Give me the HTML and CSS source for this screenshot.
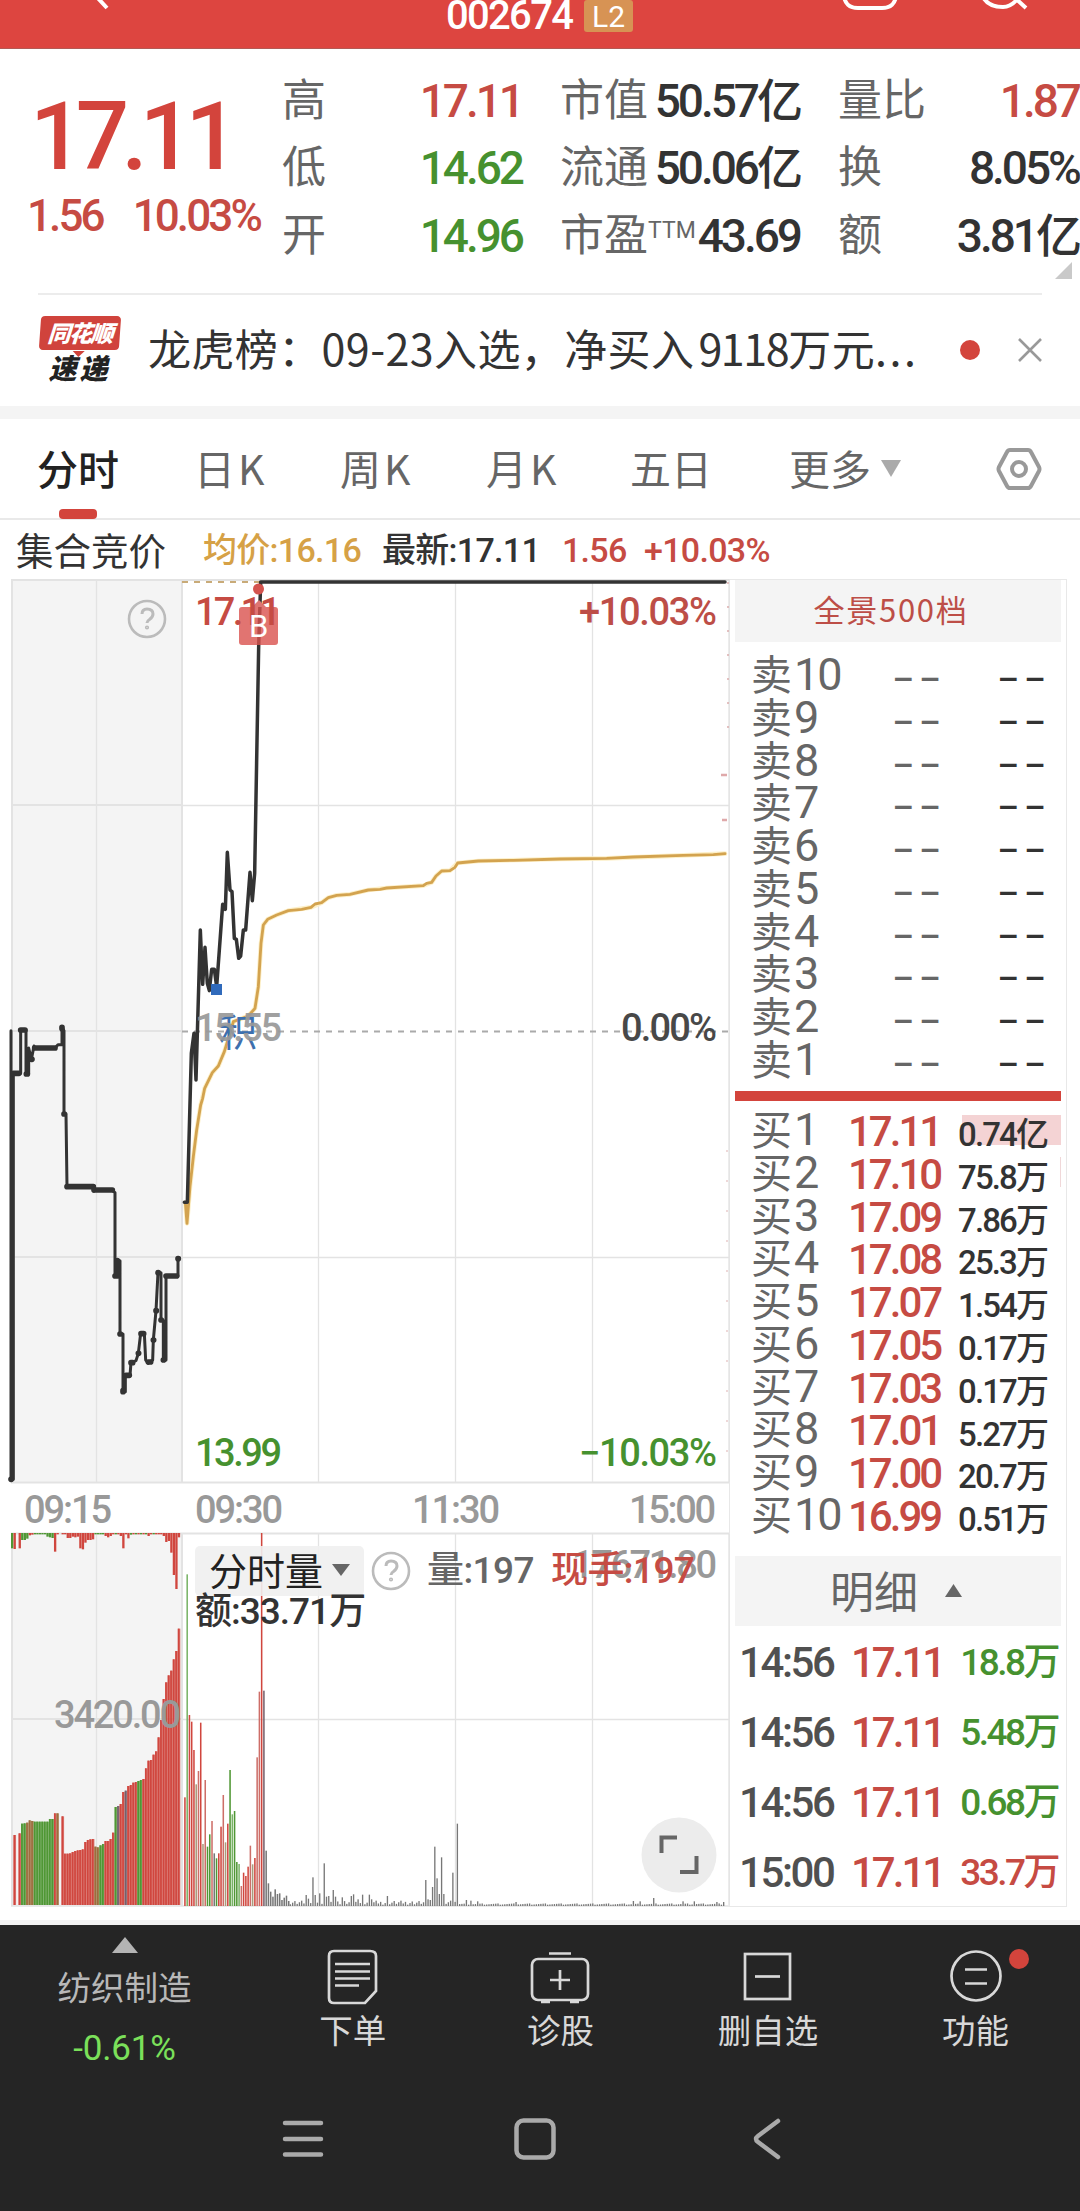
FILE: index.html
```html
<!DOCTYPE html>
<html lang="zh-CN">
<head>
<meta charset="utf-8">
<title>002674</title>
<link rel="stylesheet" href="styles.css">
</head>
<body>
<header class="topbar">
  <svg class="topbar-art" viewBox="0 0 1080 49" fill="none" stroke="#fff" stroke-width="4">
    <path d="M95 -5L107 8"/>
    <path d="M844 -6C844 4 850 8 858 8H882C890 8 896 4 896 -6"/>
    <path d="M981 -8C984 3 993 7 1003 7C1010 7 1015 3 1020 -4M1014 -3L1026 8"/>
  </svg>
  <span class="code">002674</span><span class="badge">L2</span>
</header>

<section class="quote">
  <div class="last">
    <div class="price">17.11</div>
    <div class="change"><span>1.56</span><span>10.03%</span></div>
  </div>
  <div class="metrics m1">
    <div><label>高</label><b class="up">17.11</b></div>
    <div><label>低</label><b class="down">14.62</b></div>
    <div><label>开</label><b class="down">14.96</b></div>
  </div>
  <div class="metrics m2">
    <div><label>市值</label><b>50.57亿</b></div>
    <div><label>流通</label><b>50.06亿</b></div>
    <div><label>市盈<sup>TTM</sup></label><b>43.69</b></div>
  </div>
  <div class="metrics m3">
    <div><label>量比</label><b class="up">1.87</b></div>
    <div><label>换</label><b>8.05%</b></div>
    <div><label>额</label><b>3.81亿</b></div>
  </div>
  <svg class="corner" viewBox="0 0 17 17"><path d="M17 0V17H0Z" fill="#c9c9c9"/></svg>
</section>

<section class="news">
  <div class="logo"><span class="logo-top">同花顺</span><span class="logo-bottom">速递</span></div>
  <p>龙虎榜：09-23入选，净买入<span class="amount">9118</span>万元<span class="dots">...</span></p>
  <i class="dot"></i>
  <svg class="close" viewBox="0 0 24 24" fill="none" stroke="#999" stroke-width="2.6"><path d="M1 1L23 23M23 1L1 23"/></svg>
</section>

<nav class="tabs">
  <a class="active">分时</a><a>日K</a><a>周K</a><a>月K</a><a>五日</a><a>更多</a>
  <svg class="caret" viewBox="0 0 20 17"><path d="M0 0H20L10 17Z" fill="#aaa"/></svg>
  <svg class="settings" viewBox="0 0 46 44" fill="none" stroke="#999" stroke-width="4"><path d="M14 3H32Q34 3 35 5L43 20Q44 22 43 24L35 39Q34 41 32 41H14Q12 41 11 39L3 24Q2 22 3 20L11 5Q12 3 14 3Z"/><circle cx="23" cy="22" r="7"/></svg>
</nav>

<div class="summary">
  <span class="auction">集合竞价</span><span class="avg">均价:16.16</span><span class="now">最新:17.11</span><span class="up chg">1.56</span><span class="up pct">+10.03%</span>
</div>

<main class="board">
  <div class="charts">
    <svg class="plot" viewBox="0 579 729 1341">
      <rect x="11" y="579" width="170" height="904" fill="#f4f4f4"/>
      <rect x="11" y="1533" width="170" height="373" fill="#f4f4f4"/>
      <g fill="none" stroke="#e3e3e3" stroke-width="1.3">
        <path stroke-width="2" d="M12 579V1483M182 579V1483M12 1533V1906M182 1533V1906M11 580H729M11 805H182M11 1031H182M11 1257H182M11 1482.5H729M11 1533.5H729M11 1719H182"/>
        <path d="M96.5 579V1482M318.5 579V1482M455.5 579V1482M592.5 579V1482M729 579V1482M96.5 1534V1905M318.5 1534V1905M455.5 1534V1905M592.5 1534V1905M729 1534V1905M182 805.5H729M182 1257.5H729M182 1719.5H729M11 1906H729"/>
      </g>
      <path d="M182 1031.5H729" stroke="#aaa" stroke-width="1.8" stroke-dasharray="6 6"/>
      <path d="M182 582H262" stroke="#c9ab78" stroke-width="1.8" stroke-dasharray="6 6"/>
      <path d="M728 582V730" stroke="#dcaeae" stroke-width="1.5" stroke-dasharray="2 22"/>
      <path d="M721 775H727M722 820H727" stroke="#dfa9aa" stroke-width="2.5"/>
      <path d="M727 1150V1480" stroke="#e5c4c4" stroke-width="1.3" stroke-dasharray="2 28"/>
      <g transform="translate(0 1520) scale(.33333)" id="bars"></g>
      <g transform="translate(0 1020) scale(.33333)" fill="none" stroke="#333" stroke-width="9" stroke-linejoin="round" stroke-linecap="round">
        <path d="M33 32V1378H40V160H62V30H78V162H86V84L94 118L102 78V84H165L174 74H186V22L192 32V282H198L201 500H280L282 514V510H335L345 518V768L352 722H360V942H369V1115H376V1066H390L393 1028L408 1022L415 1000L422 940H433L437 1020L445 1030L458 1020L460 960L468 872L474 758H483V900L490 902V1020H498V768H534V716"/>
        <path stroke-width="17" d="M33 1378H34M40 160H57M62 30H75M79 162H82M94 118H96M104 84H165M186 22V26M192 282H193M201 500H280M282 510H337M345 768H350M352 722V768M360 942H361M369 1115V1112M378 1066H388M393 1028H398M415 1000H416M423 941H431M445 1026H452M460 960H461M468 872H469M474 758H475M483 900H484M490 1020H491M498 768H530M534 716H535"/>
      </g>
      <g transform="translate(0 570) scale(.33333)" fill="none" stroke-linejoin="round" stroke-linecap="round">
        <path stroke="#fdf0c9" stroke-width="14" d="M556 1897L561 1960L570 1850L580 1760L590 1680L602 1605L614 1555L637 1508L655 1488L673 1445L690 1390L700 1355L745 1338L765 1315L775 1250L783 1120L790 1065L803 1048L830 1035L865 1022L933 1012L965 998L985 983L1010 976L1050 973L1105 960L1160 954L1270 947L1295 937L1308 918L1325 903L1350 902L1373 879L1435 873L1680 867L1820 865L2050 856L2175 851"/>
        <path stroke="#d3a34f" stroke-width="8.5" d="M556 1897L561 1960L570 1850L580 1760L590 1680L602 1605L608 1585L614 1555L637 1508L655 1488L673 1445L690 1390L700 1355L745 1338L765 1315L775 1250L783 1120L790 1065L803 1048L830 1035L865 1022L905 1018L933 1012L945 1002L965 998L985 983L1010 976L1050 973L1105 960L1140 958L1160 954L1270 947L1280 940L1295 937L1308 918L1325 903L1350 902L1365 892L1373 879L1435 873L1540 871L1680 867L1820 865L1900 861L2050 856L2140 854L2175 851"/>
        <path stroke="#333" stroke-width="10.5" d="M553 1897H562L574 1450L582 1390L588 1530L601 1080L608 1243L615 1132L622 1240L628 1262L635 1198H643L650 1250L668 1003L676 1018L682 847L690 960L696 965L703 1105L709 1108L716 1165L722 1158L730 1080H737L750 907L757 992L764 910L776 230L782 36H2175"/>
      </g>
      <path d="M252 607L259 600L266 607Z" fill="#de7572"/>
      <rect x="239" y="607" width="39" height="38" rx="3" fill="#d9514d" opacity=".8"/>
      <circle cx="258.5" cy="589" r="5.5" fill="#d4534e"/>
      <rect x="211" y="984" width="11" height="11" fill="#306abb"/>
      <text x="219" y="1046" font-size="38" class="cjk" fill="#3d6fae">积</text>
      <g class="num">
        <text x="195" y="625" textLength="86" fill="#c64b43">17.11</text>
        <text x="249" y="637" class="mark" fill="#fff">B</text>
        <text x="579" y="625" textLength="138" fill="#bd4e47">+10.03%</text>
        <text x="195" y="1041" textLength="87" fill="#999" opacity=".92">15.55</text>
        <text x="621" y="1041" textLength="96" fill="#484848">0.00%</text>
        <text x="195" y="1466" textLength="87" fill="#46912f">13.99</text>
        <text x="579" y="1466" textLength="138" fill="#46912f">−10.03%</text>
        <g fill="#999">
          <text x="24" y="1523" textLength="88">09:15</text>
          <text x="195" y="1523" textLength="88">09:30</text>
          <text x="412" y="1523" textLength="88">11:30</text>
          <text x="629" y="1523" textLength="87">15:00</text>
          <text x="54" y="1728" textLength="127">3420.00</text>
          <text x="572" y="1578" textLength="145">17671.80</text>
        </g>
      </g>
      <g fill="none" stroke="#bbb" stroke-width="2.6"><circle cx="147" cy="619" r="18"/><path stroke-width="3" d="M142 614Q142 609 147 609Q153 609 153 614Q153 617 149.500 619.500Q147 621 147 623"/><circle cx="147" cy="627.500" r=".8"/></g>
    </svg>
    <div class="indicator">
      <button>分时量 <svg viewBox="0 0 18 12"><path d="M0 0H18L9 12Z" fill="#666"/></svg></button>
      <svg class="help" viewBox="0 0 40 40" fill="none" stroke="#bbb" stroke-width="2.6"><circle cx="20" cy="20" r="18"/><path stroke-width="3" d="M15 15Q15 10 20 10Q26 10 26 15Q26 18 22.500 20.500Q20 22 20 24"/><circle cx="20" cy="28.500" r=".8"/></svg>
      <span class="vol">量:197</span><span class="hand">现手:197</span>
    </div>
    <div class="turnover">额:33.71万</div>
    <svg class="expand" viewBox="0 0 76 76" fill="none" stroke="#666" stroke-width="4"><circle cx="38" cy="38" r="37.500" fill="#ececec" stroke="none"/><path d="M36 20.500H20.500V36M39 55H55.500V39"/></svg>
  </div>

  <aside class="book">
    <div class="book-head">全景500档</div>
    <div class="levels sell">
      <div><label>卖<u>10</u></label><span>––</span><em>––</em></div>
      <div><label>卖<u>9</u></label><span>––</span><em>––</em></div>
      <div><label>卖<u>8</u></label><span>––</span><em>––</em></div>
      <div><label>卖<u>7</u></label><span>––</span><em>––</em></div>
      <div><label>卖<u>6</u></label><span>––</span><em>––</em></div>
      <div><label>卖<u>5</u></label><span>––</span><em>––</em></div>
      <div><label>卖<u>4</u></label><span>––</span><em>––</em></div>
      <div><label>卖<u>3</u></label><span>––</span><em>––</em></div>
      <div><label>卖<u>2</u></label><span>––</span><em>––</em></div>
      <div><label>卖<u>1</u></label><span>––</span><em>––</em></div>
    </div>
    <div class="split"></div>
    <div class="levels buy">
      <div class="depth1"><label>买<u>1</u></label><span>17.11</span><em>0.74亿</em></div>
      <div class="depth2"><label>买<u>2</u></label><span>17.10</span><em>75.8万</em></div>
      <div><label>买<u>3</u></label><span>17.09</span><em>7.86万</em></div>
      <div><label>买<u>4</u></label><span>17.08</span><em>25.3万</em></div>
      <div><label>买<u>5</u></label><span>17.07</span><em>1.54万</em></div>
      <div><label>买<u>6</u></label><span>17.05</span><em>0.17万</em></div>
      <div><label>买<u>7</u></label><span>17.03</span><em>0.17万</em></div>
      <div><label>买<u>8</u></label><span>17.01</span><em>5.27万</em></div>
      <div><label>买<u>9</u></label><span>17.00</span><em>20.7万</em></div>
      <div><label>买<u>10</u></label><span>16.99</span><em>0.51万</em></div>
    </div>
    <div class="detail-head">明细<svg viewBox="0 0 17 13"><path d="M8.500 0L17 13H0Z" fill="#666"/></svg></div>
    <div class="trades">
      <div><time>14:56</time><span>17.11</span><em class="down">18.8万</em></div>
      <div><time>14:56</time><span>17.11</span><em class="down">5.48万</em></div>
      <div><time>14:56</time><span>17.11</span><em class="down">0.68万</em></div>
      <div><time>15:00</time><span>17.11</span><em class="up">33.7万</em></div>
    </div>
  </aside>
</main>

<footer class="bottom">
  <div class="actions">
    <div class="sector"><svg viewBox="0 0 26 16"><path d="M13 0L26 16H0Z" fill="#b4b4b4"/></svg><span>纺织制造</span><b>-0.61%</b></div>
    <div class="action"><svg viewBox="0 0 60 60"><path d="M11 5H47Q53 5 53 10V45L42 57H11Q6 57 6 52V10Q6 5 11 5Z"/><path d="M12 18H47M12 25.500H47M12 32.500H47M12 39.500H36"/></svg><span>下单</span></div>
    <div class="action"><svg viewBox="0 0 60 60"><rect x="2" y="13" width="56" height="41" rx="6"/><path d="M19 7.500H41M30 24V44M20 34H40M11 56H20M40 56H49"/></svg><span>诊股</span></div>
    <div class="action"><svg viewBox="0 0 60 60"><rect x="7" y="8" width="45" height="45"/><path d="M17 30.500H42"/></svg><span>删自选</span></div>
    <div class="action"><svg viewBox="0 0 60 60"><circle cx="30" cy="30" r="24.500"/><path d="M19 23.500H41M19 37.500H41"/></svg><span>功能</span><i class="notice"></i></div>
  </div>
  <div class="system">
    <svg viewBox="0 0 42 42"><path d="M3 5H39M3 21H39M3 36.500H39"/></svg>
    <svg viewBox="0 0 42 42"><rect x="2.500" y="2.500" width="37" height="37" rx="7"/></svg>
    <svg viewBox="0 0 42 42"><path d="M32 3L12 18Q8 21 12 24L32 39"/></svg>
  </div>
</footer>
<script src="bars.js"></script>
</body>
</html>
```
FILE: bars.js
```js
(function () {
  var layer = document.getElementById('bars');
  var palette = { r: '#d0463e', g: '#4f9734', b: '#9c6d3c', d: '#75606b', k: '#777', s: '#cd6e68', t: '#79b366', y: '#a99b7b' };
  function bar(x, top, width, height, fill, opacity) {
    var el = document.createElementNS('http://www.w3.org/2000/svg', 'rect');
    el.setAttribute('x', x); el.setAttribute('y', top);
    el.setAttribute('width', width); el.setAttribute('height', Math.max(0, height));
    el.setAttribute('fill', fill);
    if (opacity) el.setAttribute('opacity', opacity);
    layer.appendChild(el);
  }
  // Call auction: matched volume rises from the base, unmatched volume hangs from the top.
  var auction = '-,945r,-,940r,911g,910g,908b,901b,903b,905g,905g,905g,905g,905g,905g,897g,897g,880r,880b,-,889r,1001r,1001r,1000r,996r,993r,991r,990r,988r,966r,960r,958r,957r,980b,982b,976g,972g,963r,963r,957r,938r,861g,858d,852r,816r,812d,798r,795r,788r,786r,783g,780g,777r,745r,722r,720r,704r,694r,652r,600r,537r,487r,466r,452r,418r,393r,326r'.split(',');
  var step = 508 / auction.length;
  auction.forEach(function (item, i) {
    if (item === '-') return;
    var top = parseInt(item, 10), color = palette[item.slice(-1)], x = 33 + i * step;
    bar(x, top, step, 1155 - top, color, 0.72);
    bar(x, top, 5, 1155 - top, color);
  });
  var hanging = '85g,87r,-,85r,60g,60g,56g,46r,44r,43g,43g,43g,43g,43g,50g,52g,54g,95r,43r,-,43r,43r,54r,54r,50r,52r,50r,85r,88r,68r,60r,60r,58r,43g,43g,43g,43g,48r,52r,48r,43r,43g,43r,48r,85r,43r,55r,44g,43r,43g,43r,43g,43r,43g,48r,43r,43g,43r,43r,43r,48r,66r,63r,98r,165r,207r,52r'.split(',');
  hanging.forEach(function (item, i) {
    if (item !== '-') bar(33 + i * step, 39, 7, parseInt(item, 10) - 39, palette[item.slice(-1)]);
  });
  // Continuous session, one bar a minute.
  var open = '832r,163t,585r,605r,690r,793y,753s,608r,972y,780s,980g,943g,903s,1000k,1015g,1000r,920r,825s,967y,911r,750g,883t,873g,1026g,1032t,1098s,1058r,1068r,1040r,977s,1033y,1014r,712s,515s,39r,512d,992k,1090k,1115k,1130k,1108k,1122k,1120k,1140k,1133k,1127k,1143k'.split(',');
  var pitch = 6.77;
  open.forEach(function (item, i) {
    var top = parseInt(item, 10);
    bar(552.5 + i * pitch, top, 4.6, 1158 - top, palette[item.slice(-1)]);
  });
  var peaks = { 54: 1125, 55: 1136, 57: 1072, 58: 1125, 60: 1120, 62: 1030, 63: 1130, 64: 1128, 66: 1110, 67: 1130, 70: 1132, 74: 1128, 75: 1123, 77: 1138, 79: 1124, 82: 1124, 83: 1138, 90: 1128, 93: 1143, 107: 1080, 108: 1138, 109: 1140, 110: 1101, 111: 980, 112: 1075, 113: 1122, 114: 1012, 115: 1122, 119: 1058, 121: 911, 125: 1140, 127: 1142, 130: 1144, 147: 1146, 199: 1143, 202: 1144, 208: 1134, 221: 1144, 226: 1144, 236: 1146, 239: 1146 };
  for (var i = 47; i < 240; i++) {
    var noise = i < 122 ? (i * 37 % 11) * 1.2 : (i * 29 % 7) * 0.6;
    var top = peaks[i] || 1154 - noise;
    bar(551 + i * pitch, top, 4, 1158 - top, palette.k);
  }
})();
```
FILE: styles.css
```css
* { box-sizing: border-box; }
body { margin: 0; width: 1080px; height: 2211px; overflow: hidden; background: #fff; color: #333; font-family: Roboto, "Noto Sans CJK SC", sans-serif; }
svg { display: block; flex: none; overflow: visible; }
b, em, i, label { font-style: normal; }
.up { color: #c64b43; }
.down { color: #46912f; }

.topbar { position: relative; height: 49px; padding-left: 446px; display: flex; align-items: flex-start; background: #dd4540; border-bottom: 1px solid #b35a55; overflow: hidden; color: #fff; }
.topbar-art { position: absolute; left: 0; top: 0; width: 1080px; height: 49px; }
.code { margin-top: -7px; width: 138px; font-size: 40px; line-height: 46px; font-weight: 500; letter-spacing: -1.7px; }
.badge { width: 49px; height: 32px; border-radius: 3px; background: #d79354; text-align: center; font-size: 30px; line-height: 33px; }

.quote { position: relative; height: 244px; padding-top: 18px; display: flex; }
.last { width: 282px; color: #d3443c; }
.price { margin: 15px 0 0 30px; font-size: 94px; line-height: 110px; font-weight: 500; letter-spacing: -7.7px; }
.change { display: flex; gap: 30px; margin: 0 0 0 27px; font-size: 44px; line-height: 48px; color: #c64b43; letter-spacing: -2.9px; font-weight: 500; }
.metrics > div { display: flex; justify-content: space-between; align-items: center; height: 67.5px; white-space: nowrap; }
.metrics label { font-size: 44px; line-height: 60px; color: #666; }
.metrics b { font-size: 46px; line-height: 60px; font-weight: 500; letter-spacing: -3px; }
.metrics sup { font-size: 23px; line-height: 0; vertical-align: 13px; }
.m1 { width: 240px; }
.m2 { width: 240px; margin-left: 38px; }
.m3 { width: 241px; margin-left: 38px; }
.corner { position: absolute; left: 1055px; top: 213px; width: 17px; height: 17px; }

.news { position: relative; height: 126px; padding: 0 38px; display: flex; align-items: center; border-bottom: 13px solid #f4f4f4; }
.news::before { content: ""; position: absolute; left: 38px; right: 38px; top: 0; height: 2px; background: #ececec; }
.logo { position: relative; width: 83px; height: 68px; display: flex; flex-direction: column; align-items: center; font-family: "Noto Sans CJK SC", sans-serif; font-weight: 900; font-style: italic; }
.logo-top { width: 80px; height: 36px; background: #d0433c; color: #fff; font-size: 23px; line-height: 33px; text-align: center; border-radius: 4px; transform: skewX(-4deg); letter-spacing: -1.5px; }
.logo-top::after { content: ""; position: absolute; left: 34px; top: 35px; border: 6px solid transparent; border-top-color: #d0433c; border-bottom: 0; }
.logo-bottom { font-size: 28px; line-height: 34px; letter-spacing: 3px; color: #222; }
.news p { margin: -5px 0 0 27px; width: 800px; font-family: "Noto Sans CJK SC", sans-serif; font-size: 43px; line-height: 60px; letter-spacing: .4px; white-space: nowrap; }
.amount { margin-left: 4px; letter-spacing: -1.4px; }
.dots { letter-spacing: 2.5px; }
.dot { width: 20px; height: 20px; margin-left: 12px; border-radius: 50%; background: #d3443c; }
.close { width: 24px; height: 24px; margin-left: 38px; }

.tabs { position: relative; height: 101px; display: flex; align-items: center; padding-left: 37px; border-bottom: 2px solid #e9e9e9; color: #666; font-family: "Noto Sans CJK SC", sans-serif; font-size: 41px; line-height: 60px; }
.tabs a { width: 150px; margin-top: -4px; white-space: nowrap; }
.tabs a:nth-child(1) { width: 157px; color: #222; font-weight: 500; }
.tabs a:nth-child(2) { width: 146px; letter-spacing: 3px; }
.tabs a:nth-child(3) { width: 146px; letter-spacing: 3px; }
.tabs a:nth-child(4) { width: 144px; letter-spacing: 3px; }
.tabs a:nth-child(5) { width: 159px; }
.tabs a:nth-child(6) { width: 92px; }
.tabs .active::after { content: ""; position: absolute; left: 59px; bottom: -1px; width: 38px; height: 10px; border-radius: 4px; background: #d3443c; }
.caret { width: 20px; height: 17px; }
.settings { width: 46px; height: 44px; margin-left: 95px; }

.summary { height: 59px; display: flex; align-items: center; padding: 1px 0 0 16px; font-size: 34px; line-height: 50px; font-weight: 500; letter-spacing: -.7px; white-space: nowrap; }
.summary .auction { width: 187px; margin-top: -3px; font-family: "Noto Sans CJK SC", sans-serif; font-size: 37.5px; font-weight: 400; letter-spacing: 0; }
.summary .avg { width: 179px; color: #d6a146; }
.summary .now { width: 180px; }
.summary .chg { width: 82px; }

.board { display: flex; height: 1341px; }
.charts { position: relative; width: 729px; }
.plot { width: 729px; height: 1341px; }
.plot text { font-family: Roboto, sans-serif; font-size: 38px; font-weight: 500; }
.plot .cjk { font-family: "Noto Sans CJK SC", sans-serif; font-weight: 400; }
.plot .mark { font-size: 31px; font-weight: 400; }
.indicator { position: absolute; left: 195px; top: 967px; height: 50px; display: flex; align-items: center; font-size: 37px; font-weight: 500; line-height: 50px; letter-spacing: -.6px; white-space: nowrap; }
.indicator button { display: flex; align-items: center; width: 169px; height: 50px; padding: 0 0 5px 14px; gap: 9px; border: 0; border-radius: 5px; background: #f0f0f0e6; color: #222; font: 400 38px/50px "Noto Sans CJK SC", sans-serif; }
.indicator button svg { width: 18px; height: 12px; margin-top: 3px; }
.help { width: 40px; height: 40px; margin-left: 7px; }
.vol { margin-left: 16px; width: 124px; color: #666; }
.hand { color: #c64b43; }
.turnover { position: absolute; left: 195px; top: 1008px; font-size: 37px; line-height: 50px; font-weight: 500; letter-spacing: -1px; }
.expand { position: absolute; left: 641px; top: 1238px; width: 76px; height: 76px; }

.book { width: 338px; height: 1328px; border: 1.5px solid #e8e8e8; padding-left: 5px; }
.book-head { width: 326px; height: 62px; padding-right: 14px; background: #f4f4f4; color: #bd4e47; text-align: center; font: 400 31px/58px "Noto Sans CJK SC", sans-serif; letter-spacing: 1.7px; }
.levels > div { position: relative; height: 42.8px; width: 326px; display: flex; align-items: center; padding-left: 16px; white-space: nowrap; line-height: 43px; }
.levels label { width: 97px; color: #666; font-size: 41px; }
.levels u { margin-left: 2px; font-size: 45px; line-height: 40px; letter-spacing: -2px; text-decoration: none; }
.sell { padding-top: 13px; height: 449px; }
.sell span, .sell em { width: 105px; padding-left: 46px; font: 700 33.5px/43px "Liberation Sans", sans-serif; letter-spacing: 8px; }
.sell span { color: #666; }
.split { width: 326px; height: 10px; background: #d3443c; }
.buy { padding-top: 9px; height: 455px; }
.buy span, .trades span { font-size: 42px; font-weight: 500; color: #c64b43; letter-spacing: -3px; }
.buy span { width: 100px; }
.buy em { position: absolute; right: 14px; top: 3px; font-size: 33px; font-weight: 500; letter-spacing: -1.9px; }
.depth1::before { content: ""; position: absolute; right: 0; top: 5px; width: 99px; height: 30px; background: #f4d3d4; }
.depth2::before { content: ""; position: absolute; right: 0; top: 4px; width: 1px; height: 30px; background: #f0d8d9; }
.detail-head { width: 326px; height: 70px; background: #f4f4f4; display: flex; align-items: center; padding: 0 0 2px 95px; gap: 27px; color: #666; font: 400 44px/64px "Noto Sans CJK SC", sans-serif; }
.detail-head svg { width: 17px; height: 13px; }
.trades { padding-top: 1px; }
.trades > div { position: relative; height: 70px; display: flex; align-items: center; padding-left: 4px; white-space: nowrap; }
.trades time { width: 112px; font-size: 42px; font-weight: 500; color: #505050; letter-spacing: -2.4px; }
.trades em { position: absolute; right: 8px; top: 12px; font-size: 37px; line-height: 48px; font-weight: 500; letter-spacing: -2.5px; }

.bottom { height: 291px; background: #252525; border-top: 5px solid #f2f2f2; color: #d8d8d8; font-family: "Noto Sans CJK SC", sans-serif; }
.actions { height: 169px; display: flex; }
.sector { width: 249px; display: flex; flex-direction: column; align-items: center; padding-top: 12px; }
.sector svg { width: 26px; height: 16px; }
.sector span { margin-top: 9px; font-size: 33.5px; line-height: 48px; color: #b8b8b8; }
.sector b { margin-top: 17px; font: 400 35px/44px Roboto, sans-serif; color: #7be05a; letter-spacing: -.2px; }
.action { position: relative; width: 207.6px; display: flex; flex-direction: column; align-items: center; padding-top: 21px; }
.action svg { width: 60px; height: 60px; fill: none; stroke: #d8d8d8; stroke-width: 2.7; }
.action span { margin-top: -1px; font-size: 33.5px; line-height: 48px; }
.notice { position: absolute; left: 137px; top: 24px; width: 20px; height: 20px; border-radius: 50%; background: #d3443c; }
.system { display: flex; padding: 24px 0 0 282px; gap: 190px; }
.system svg { width: 42px; height: 42px; fill: none; stroke: #aaa; stroke-width: 4.5; stroke-linecap: round; stroke-linejoin: round; }
```
